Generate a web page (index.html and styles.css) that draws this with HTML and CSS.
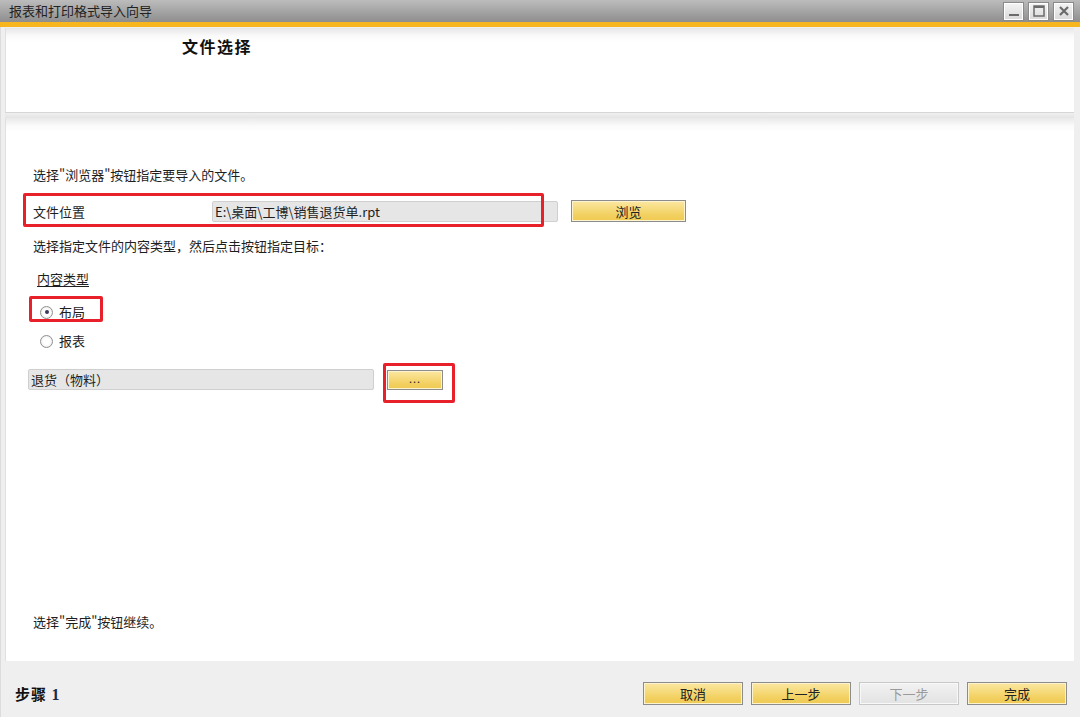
FILE: index.html
```html
<!DOCTYPE html>
<html lang="zh">
<head>
<meta charset="utf-8">
<title>报表和打印格式导入向导</title>
<link rel="stylesheet" href="styles.css">
</head>
<body>
<div class="window">
  <div class="titlebar">
    <span class="title">报表和打印格式导入向导</span>
    <div class="winbtns">
      <span class="wb"><svg width="14" height="14" viewBox="0 0 14 14"><rect x="2" y="10" width="10" height="2" fill="#6b6b6b"/></svg></span>
      <span class="wb"><svg width="14" height="14" viewBox="0 0 14 14"><rect x="2" y="2" width="10" height="10" fill="none" stroke="#6b6b6b" stroke-width="1.5"/><rect x="2" y="2" width="10" height="2" fill="#6b6b6b"/></svg></span>
      <span class="wb"><svg width="14" height="14" viewBox="0 0 14 14"><path d="M3 3 L11 11 M11 3 L3 11" stroke="#6b6b6b" stroke-width="2.2"/></svg></span>
    </div>
  </div>
  <div class="accent"></div>
  <div class="frame">
    <div class="header">
      <h1 class="heading">文件选择</h1>
    </div>
    <div class="sep"></div>
    <div class="content">
      <p class="text first">选择"浏览器"按钮指定要导入的文件。</p>
      <div class="filerow">
        <span class="label">文件位置</span>
        <span class="field wide">E:\桌面\工博\销售退货单.rpt</span>
        <button class="btn browse">浏览</button>
        <span class="mark mark-file"></span>
      </div>
      <p class="text second">选择指定文件的内容类型，然后点击按钮指定目标：</p>
      <p class="text group">内容类型</p>
      <div class="radios">
        <label class="radio"><span class="dot checked"></span>布局<span class="mark mark-radio"></span></label>
        <label class="radio"><span class="dot"></span>报表</label>
      </div>
      <div class="targetrow">
        <span class="field target">退货（物料）</span>
        <button class="btn dots">...</button>
        <span class="mark mark-dots"></span>
      </div>
      <p class="text last">选择"完成"按钮继续。</p>
    </div>
    <div class="footer">
      <span class="step">步骤 <b class="num">1</b></span>
      <div class="actions">
        <button class="btn act">取消</button>
        <button class="btn act">上一步</button>
        <button class="btn act disabled">下一步</button>
        <button class="btn act">完成</button>
      </div>
    </div>
  </div>
</div>
</body>
</html>
```
FILE: styles.css
```css
* { box-sizing: border-box; }
html, body { margin: 0; padding: 0; }
body {
  width: 1080px;
  height: 717px;
  overflow: hidden;
  font-family: "Noto Sans CJK SC", "Noto Sans", sans-serif;
  font-size: 13px;
  color: #1e1e1e;
  background: #f0f0f0;
}
.window { display: flex; flex-direction: column; height: 717px; }
.titlebar {
  height: 22px;
  background: linear-gradient(#bcbcbc, #8e8e8e);
  display: flex;
  align-items: center;
  justify-content: space-between;
  padding: 0 6px 0 9px;
}
.title { font-size: 13px; color: #222; line-height: 22px; }
.winbtns { display: flex; gap: 4px; align-items: center; }
.wb {
  width: 21px; height: 19px;
  background: linear-gradient(#f4f4f4, #d9d9d9);
  border: 1px solid #8a8a8a;
  box-shadow: inset 0 0 0 1px #fff;
  display: flex; align-items: center; justify-content: center;
}
.accent { height: 5px; background: #f7b51e; }
.frame {
  flex: 1;
  display: flex;
  flex-direction: column;
  background: #efefef;
  padding: 1px 6px 0 4px;
  border-left: 1px solid #dcdcdc;
}
.header {
  height: 84px;
  background: linear-gradient(#e6e6e6 0, #fafafa 8px, #fff 14px);
  border-left: 1px solid #e0e0e0;
  padding: 8px 0 0 176px;
}
.heading { margin: 0; font-size: 16px; font-weight: 700; letter-spacing: 1.5px; line-height: 20px; color: #111; }
.sep {
  height: 6px;
  background: linear-gradient(#d6d6d6 0, #d6d6d6 1px, #efefef 1px, #e4e4e4 100%);
}
.content {
  flex: 1;
  background: linear-gradient(#e9e9e9 0, #fbfbfb 8px, #fff 14px);
  border-left: 1px solid #e0e0e0;
  display: flex;
  flex-direction: column;
  padding: 0 0 30px 27px;
}
.text { margin: 0; line-height: 18px; }
.first { margin-top: 48px; }
.filerow {
  position: relative;
  display: flex;
  align-items: center;
  margin-top: 16px;
  height: 22px;
}
.label { width: 179px; }
.field {
  height: 21px;
  background: #e6e6e6;
  border: 1px solid #cfcfcf;
  border-radius: 2px;
  line-height: 19px;
  padding-left: 2px;
  white-space: nowrap;
  overflow: hidden;
}
.wide { width: 346px; font-family: "Noto Sans CJK SC", "Liberation Sans", sans-serif; }
.btn {
  font-family: "Noto Sans CJK SC", sans-serif;
  font-size: 13px;
  color: #222;
  background: linear-gradient(#fbe7a2, #f2d060 70%, #efca52);
  border: 1px solid #8c8c8c;
  box-shadow: inset 0 0 0 1px #fdf3cc;
  padding: 0;
  line-height: 19px;
  cursor: default;
}
.browse { margin-left: 13px; width: 115px; height: 22px; }
.mark {
  position: absolute;
  border: 3px solid #e8202a;
  border-radius: 2px;
  pointer-events: none;
}
.mark-file { left: -10px; top: -7px; width: 521px; height: 34px; }
.second { margin-top: 15px; }
.group { margin-top: 15px; margin-left: 4px; text-decoration: underline; text-underline-offset: 2px; }
.radios { display: flex; flex-direction: column; margin-top: 15px; margin-left: 7px; gap: 11px; }
.radio { position: relative; display: flex; align-items: center; gap: 6px; line-height: 18px; width: max-content; }
.dot {
  width: 13px; height: 13px;
  border-radius: 50%;
  border: 1px solid #8f8f8f;
  background: radial-gradient(circle, #fff 40%, #e2e2e2);
  position: relative;
}
.dot.checked::after {
  content: "";
  position: absolute;
  left: 3.5px; top: 3.5px;
  width: 4px; height: 4px;
  border-radius: 50%;
  background: #3a3a5a;
}
.mark-radio { left: -11px; top: -7px; width: 74px; height: 26px; }
.targetrow {
  position: relative;
  display: flex;
  align-items: center;
  margin-top: 19px;
  margin-left: -5px;
  height: 21px;
}
.target { width: 346px; }
.dots { margin-left: 13px; width: 56px; height: 20px; font-size: 11px; line-height: 12px; letter-spacing: 1px; padding-bottom: 4px; }
.mark-dots { left: 355px; top: -6px; width: 72px; height: 40px; }
.last { margin-top: auto; }
.footer {
  height: 56px;
  display: flex;
  align-items: center;
  justify-content: space-between;
  padding: 8px 7px 0 10px;
}
.step { font-size: 15px; font-weight: 700; color: #111; letter-spacing: 1px; }
.num { font-family: "Liberation Serif", serif; font-size: 16px; color: #1a2a4a; }
.actions { display: flex; gap: 8px; }
.act { width: 100px; height: 23px; }
.act.disabled {
  background: linear-gradient(#f2f2f2, #e2e2e2);
  border-color: #c8c8c8;
  box-shadow: inset 0 0 0 1px #f8f8f8;
  color: #9a9a9a;
}
```
